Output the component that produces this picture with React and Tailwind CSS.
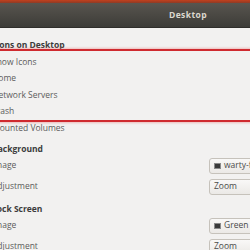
export default function App() {
  const font = { fontFamily: '"Open Sans", "Noto Sans", sans-serif' }
  return (
    <div className="relative w-[250px] h-[250px] overflow-hidden bg-[#f2f1f0]" style={font}>
      {/* Title bar */}
      <div className="h-[28px] flex flex-col">
        <div className="h-[3px] bg-gradient-to-b from-[#c2401c] to-[#8e3a24]" />
        <div className="flex-1 flex items-center bg-gradient-to-b from-[#58554f] to-[#3d3c38] border-b border-[#2f2e2b]">
          <span className="ml-[169px] text-[8.5px] font-bold text-[#dcd8cf] tracking-[0.4px]">Desktop</span>
        </div>
      </div>

      {/* Settings content */}
      <div className="ml-[-8px] pt-[11.5px] flex flex-col">
        <div className="h-[12px] flex items-center text-[8.5px] font-bold text-[#3c3c3c]">Icons on Desktop</div>
        <div className="mt-[2.5px] flex flex-col text-[8.5px] text-[#5c5c5c]">
          {['Show Icons', 'Home', 'Network Servers', 'Trash', 'Mounted Volumes'].map((t) => (
            <div key={t} className="h-[16.5px] flex items-center">{t}</div>
          ))}
        </div>

        <div className="mt-[6.5px] h-[12px] flex items-center text-[8.5px] font-bold text-[#3c3c3c]">Background</div>
        <Row label="Image"><Dropdown icon text="warty-final-ubuntu.png" /></Row>
        <Row label="Adjustment"><Dropdown text="Zoom" /></Row>

        <div className="mt-[6px] h-[12px] flex items-center text-[8.5px] font-bold text-[#3c3c3c]">Lock Screen</div>
        <Row label="Image"><Dropdown icon text="Green" /></Row>
        <Row label="Adjustment"><Dropdown text="Zoom" /></Row>
      </div>

      {/* Red annotation box over the icon options */}
      <div className="absolute left-[-4px] right-[-4px] top-[49px] h-[73px] border-y-2 border-[#cf2a2f] shadow-[0_0_2px_1px_rgba(230,120,120,0.45)]" />
    </div>
  )
}

function Row({ label, children }) {
  return (
    <div className="h-[21px] flex items-center">
      <div className="w-[217px] shrink-0 text-[8.5px] text-[#5c5c5c]">{label}</div>
      {children}
    </div>
  )
}

function Dropdown({ text, icon }) {
  return (
    <div className="w-[80px] h-[16px] shrink-0 flex items-center gap-[3px] px-[4px] rounded-[3px] border border-[#c6c2bb] bg-gradient-to-b from-[#f9f8f7] to-[#ebe9e6] text-[8.5px] text-[#4a4a4a] whitespace-nowrap overflow-hidden">
      {icon && <span className="w-[7px] h-[6px] shrink-0 bg-[#3a3a3a] border border-[#8a8a8a]" />}
      <span>{text}</span>
    </div>
  )
}
